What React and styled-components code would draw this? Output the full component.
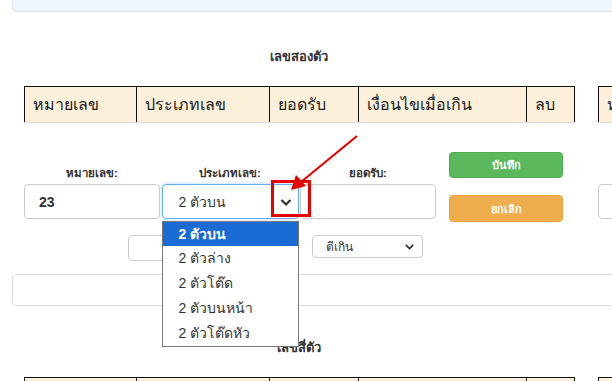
import React from 'react'
import styled, { createGlobalStyle } from 'styled-components'

const GlobalStyle = createGlobalStyle`
  html, body {
    margin: 0;
    padding: 0;
    background: #fff;
    overflow: hidden;
  }
  body {
    font-family: Tahoma, "Liberation Sans", "Noto Sans", sans-serif;
    color: #333;
  }
`

const Page = styled.div`
  position: relative;
  width: 1300px;
  height: 381px;
  padding-left: 12px;
`

const TopPanel = styled.div`
  height: 11px;
  background: #eef5fd;
  border: 1px solid #dde3ea;
  border-top: none;
  border-radius: 0 0 0 4px;
`

const Columns = styled.div`
  display: flex;
  gap: 24px;
  padding-left: 12px;
`

const Column = styled.div`
  width: 550px;
  flex-shrink: 0;
`

const SectionTitle = styled.h4`
  margin: ${p => p.$top}px 0 19px;
  height: 20px;
  line-height: 20px;
  font-size: 13px;
  font-weight: bold;
  text-align: center;
  color: #333;
`

const HeadTable = styled.table`
  width: 550px;
  border-collapse: collapse;
  table-layout: fixed;
`

const HeadCell = styled.th`
  box-sizing: border-box;
  width: ${p => p.$w}px;
  height: 36px;
  padding: 0 0 0 8px;
  background: #fdf0da;
  border: 1px solid #111;
  border-bottom: 1px solid #ddd;
  text-align: left;
  font-size: 16px;
  font-weight: normal;
  color: #222;
  white-space: nowrap;
  overflow: hidden;
`

const EntryForm = styled.div`
  display: flex;
  align-items: flex-start;
  margin-top: 29px;
`

const Fields = styled.div`
  display: grid;
  grid-template-columns: 136px 137px 136px;
  gap: 1.5px;
  padding-top: 14px;
`

const Field = styled.div`
  position: relative;
  display: flex;
  flex-direction: column;
  align-items: stretch;
`

const Label = styled.label`
  height: 14px;
  line-height: 14px;
  margin-bottom: 4px;
  text-align: center;
  font-size: 11.5px;
  font-weight: bold;
  color: #333;
`

const TextBox = styled.div`
  box-sizing: border-box;
  height: 35px;
  padding-left: 14px;
  display: flex;
  align-items: center;
  border: 1px solid #ccc;
  border-radius: 4px;
  background: #fff;
  font-size: 14px;
  font-weight: bold;
  color: #333;
`

const SelectBox = styled.div`
  box-sizing: border-box;
  height: 35px;
  padding: 0 4px 0 16px;
  display: flex;
  align-items: center;
  justify-content: space-between;
  border: 1px solid #66afe9;
  border-radius: 4px;
  box-shadow: 0 0 4px rgba(102, 175, 233, 0.45);
  background: #fff;
  font-size: 14px;
  color: #333;
`

const Chevron = styled.svg`
  width: ${p => p.$size}px;
  height: ${p => p.$size}px;
  flex-shrink: 0;
`

const DropList = styled.ul`
  position: absolute;
  top: 55px;
  left: 0;
  z-index: 5;
  width: 137px;
  margin: 0;
  padding: 0;
  list-style: none;
  background: #fff;
  border: 1px solid #767676;
  box-sizing: border-box;
`

const DropItem = styled.li`
  height: ${p => (p.$first ? 24 : 25)}px;
  line-height: ${p => (p.$first ? 24 : 25)}px;
  padding-left: 16px;
  font-size: 14px;
  color: ${p => (p.$active ? '#fff' : '#333')};
  background: ${p => (p.$active ? '#1b6bd4' : '#fff')};
  font-weight: ${p => (p.$active ? 'bold' : 'normal')};
`

const ButtonStack = styled.div`
  display: flex;
  flex-direction: column;
  gap: 17px;
  margin-left: 13px;
`

const ActionButton = styled.button`
  width: 114px;
  height: ${p => p.$h}px;
  border: 1px solid ${p => p.$border};
  border-radius: 4px;
  background: ${p => p.$bg};
  color: #fff;
  font-family: inherit;
  font-size: 11px;
  font-weight: bold;
  padding: 0;
`

const ExtraRow = styled.div`
  display: flex;
  align-items: flex-start;
  gap: 22px;
  margin-top: 13px;
  padding-left: 104px;
`

const SmallInput = styled.div`
  box-sizing: border-box;
  width: 162px;
  height: 26px;
  border: 1px solid #ccc;
  border-radius: 4px;
`

const SmallSelect = styled.div`
  box-sizing: border-box;
  width: 111px;
  height: 23px;
  padding: 0 6px 0 13px;
  display: flex;
  align-items: center;
  justify-content: space-between;
  border: 1px solid #ccc;
  border-radius: 4px;
  font-size: 12px;
  color: #333;
`

const WidePanel = styled.div`
  box-sizing: border-box;
  height: 32px;
  margin-top: 13px;
  border: 1px solid #ddd;
  border-radius: 4px;
  background: #fff;
`

const Annotation = styled.svg`
  position: absolute;
  left: 0;
  top: 0;
  width: 612px;
  height: 381px;
  z-index: 10;
  pointer-events: none;
`

const headers = [
  ['หมายเลข', 112],
  ['ประเภทเลข', 133],
  ['ยอดรับ', 89],
  ['เงื่อนไขเมื่อเกิน', 168],
  ['ลบ', 48],
]

const options = ['2 ตัวบน', '2 ตัวล่าง', '2 ตัวโต๊ด', '2 ตัวบนหน้า', '2 ตัวโต๊ดหัว']

const ChevronIcon = ({ size }) => (
  <Chevron $size={size} viewBox="0 0 16 16">
    <path d="M3.5 6 L8 10.5 L12.5 6" fill="none" stroke="#333" strokeWidth="2.2" />
  </Chevron>
)

const Header = () => (
  <HeadTable>
    <thead>
      <tr>
        {headers.map(([t, w]) => (
          <HeadCell key={t} $w={w}>{t}</HeadCell>
        ))}
      </tr>
    </thead>
  </HeadTable>
)

const NumberSection = ({ open }) => (
  <Column>
    <SectionTitle $top={35}>เลขสองตัว</SectionTitle>
    <Header />
    <EntryForm>
      <Fields>
        <Field>
          <Label>หมายเลข:</Label>
          <TextBox>{open ? '23' : ''}</TextBox>
        </Field>
        <Field>
          <Label>ประเภทเลข:</Label>
          <SelectBox>
            2 ตัวบน
            <ChevronIcon size={16} />
          </SelectBox>
          {open && (
            <DropList>
              {options.map((o, i) => (
                <DropItem key={o} $first={i === 0} $active={i === 0}>{o}</DropItem>
              ))}
            </DropList>
          )}
        </Field>
        <Field>
          <Label>ยอดรับ:</Label>
          <TextBox />
        </Field>
      </Fields>
      <ButtonStack>
        <ActionButton $h={26} $bg="#5cb85c" $border="#4cae4c">บันทึก</ActionButton>
        <ActionButton $h={27} $bg="#f0ad4e" $border="#eea236">ยกเลิก</ActionButton>
      </ButtonStack>
    </EntryForm>
    <ExtraRow>
      <SmallInput />
      <SmallSelect>
        ตีเกิน
        <ChevronIcon size={13} />
      </SmallSelect>
    </ExtraRow>
  </Column>
)

const App = () => (
  <>
    <GlobalStyle />
    <Page>
      <TopPanel />
      <Columns>
        <NumberSection open />
        <NumberSection />
      </Columns>
      <WidePanel />
      <Columns>
        <Column>
          <SectionTitle $top={32}>เลขสี่ตัว</SectionTitle>
          <Header />
        </Column>
        <Column>
          <SectionTitle $top={32}>เลขสี่ตัว</SectionTitle>
          <Header />
        </Column>
      </Columns>
      <Annotation viewBox="0 0 612 381">
        <rect x="272.5" y="181.5" width="37" height="34" fill="none" stroke="#e60000" strokeWidth="3" />
        <line x1="357" y1="136" x2="301" y2="182" stroke="#e60000" strokeWidth="2.2" />
        <polygon points="291,190 296,175 306,186" fill="#e60000" />
      </Annotation>
    </Page>
  </>
)

export default App
